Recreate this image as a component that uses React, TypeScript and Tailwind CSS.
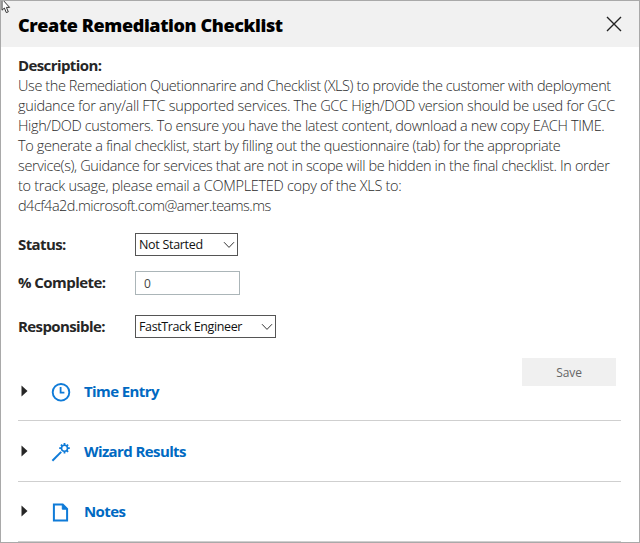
import type { ReactNode } from "react";

const description = [
  { text: "Use the Remediation Quetionnarire and Checklist (XLS) to provide the customer with deployment", cls: "tracking-[-0.4px]" },
  { text: "guidance for any/all FTC supported services. The GCC High/DOD version should be used for GCC", cls: "tracking-[-0.315px]" },
  { text: "High/DOD customers. To ensure you have the latest content, download a new copy EACH TIME.", cls: "tracking-[-0.36px]" },
  { text: "To generate a final checklist, start by filling out the questionnaire (tab) for the appropriate", cls: "tracking-[-0.383px]" },
  { text: "service(s), Guidance for services that are not in scope will be hidden in the final checklist. In order", cls: "tracking-[-0.37px]" },
  { text: "to track usage, please email a COMPLETED copy of the XLS to:", cls: "tracking-[-0.287px]" },
  { text: "d4cf4a2d.microsoft.com@amer.teams.ms", cls: "tracking-[-0.51px]" },
];

function Chevron() {
  return (
    <svg width="12" height="8" viewBox="0 0 12 8" fill="none" stroke="#333" strokeWidth="1">
      <path d="M1 1.2 6 6.4 11 1.2" />
    </svg>
  );
}

function ClockIcon() {
  return (
    <svg width="20" height="20" viewBox="0 0 20 20" fill="none" stroke="#0f7bd8">
      <circle cx="10" cy="10.3" r="8.3" strokeWidth="1.9" />
      <path d="M9.6 5V10.7H13.4" strokeWidth="1.8" />
    </svg>
  );
}

function WandIcon() {
  return (
    <svg width="20" height="20" viewBox="0 0 20 20" fill="none" stroke="#0f7bd8">
      <path d="M1.4 18.7 10.2 9.9" strokeWidth="2" />
      <circle cx="13.5" cy="6.2" r="3" strokeWidth="1.6" />
      <path d="M13.5 3.2V1M13.5 9.2V11.4M10.5 6.2H8.2M16.5 6.2H18.8M11.4 4.1 9.9 2.6M15.6 4.1 17.1 2.6M15.6 8.3 17.1 9.8" strokeWidth="1.8" />
    </svg>
  );
}

function NoteIcon() {
  return (
    <svg width="20" height="20" viewBox="0 0 20 20" fill="none" stroke="#0f7bd8" strokeWidth="2">
      <path d="M2.9 2.4H11.7L16.1 6.9V18.6H2.9Z" />
      <path d="M11.3 2.4V7.2H16.1Z" fill="#0f7bd8" strokeWidth="1" />
    </svg>
  );
}

function Section({ icon, children, cls }: { icon: ReactNode; children: ReactNode; cls: string }) {
  return (
    <button type="button" className={"flex w-[603px] items-start border-b border-[#cfcfcf] text-left " + cls}>
      <svg className="ml-[3px] mt-[15px]" width="7" height="12" viewBox="0 0 7 12">
        <path d="M.5.5 6.5 6 .5 11.5Z" fill="#262626" />
      </svg>
      <span className="ml-[23px] mt-[12px]">{icon}</span>
      <span className="ml-[13px] mt-[11px] text-[15px] font-bold leading-5 tracking-[-0.6px] text-[#0069c2]">{children}</span>
    </button>
  );
}

export default function App() {
  return (
    <div className="relative flex h-[543px] w-[640px] flex-col overflow-hidden border border-[#a9a9a9] bg-white font-['Open_Sans','Noto_Sans',sans-serif] text-[#262626]">
      <header className="flex h-[46px] shrink-0 items-center justify-between bg-[#f1f1f1] pl-[17px] pr-[17px]">
        <h1 className="mt-[2px] whitespace-nowrap text-[18px] font-extrabold leading-6 tracking-[-0.39px] text-black">Create Remediation Checklist</h1>
        <button type="button" aria-label="Close">
          <svg width="16" height="16" viewBox="0 0 16 16" stroke="#222" strokeWidth="1.4">
            <path d="M1 1 15 15M15 1 1 15" />
          </svg>
        </button>
      </header>

      <main className="flex flex-col pl-[17px]">
        <h2 className="mt-[8px] text-[15px] font-bold leading-5 tracking-[-0.6px]"><span>Description:</span></h2>
        <div className="mt-[1px] text-[14.5px] font-light leading-5 text-[#2b2b2b]">
          {description.map((l) => (
            <p key={l.text} className="whitespace-nowrap"><span className={l.cls}>{l.text}</span></p>
          ))}
        </div>

        <div className="mt-[17px] flex h-[23px] items-center">
          <label className="-mt-[2px] w-[117px] text-[15px] font-bold leading-5 tracking-[-0.6px]"><span>Status:</span></label>
          <div className="flex h-[23px] w-[103px] items-center justify-between border border-[#555] pl-[3px] pr-[2px] text-[12.5px] text-[#111]">
            <span className="mt-[1px] tracking-[-0.3px]">Not Started</span>
            <Chevron />
          </div>
        </div>
        <div className="mt-[15px] flex h-[24px] items-center">
          <label className="-mt-[2px] w-[117px] text-[15px] font-bold leading-5 tracking-[-0.55px]"><span>% Complete:</span></label>
          <div className="flex h-[24px] w-[105px] items-center border border-[#abb5b8] pl-[8px] pt-[1px] text-[12px] text-[#444]">0</div>
        </div>
        <div className="mt-[20px] flex h-[23px] items-center">
          <label className="-mt-[2px] w-[117px] text-[15px] font-bold leading-5 tracking-[-0.6px]"><span>Responsible:</span></label>
          <div className="flex h-[23px] w-[141px] items-center justify-between border border-[#555] pl-[3px] pr-[2px] text-[12.5px] text-[#111]">
            <span className="mt-[2px] tracking-[-0.38px]">FastTrack Engineer</span>
            <Chevron />
          </div>
        </div>

        <button type="button" className="ml-[504px] mt-[20px] flex h-[28px] w-[94px] items-center justify-center bg-[#f0f0f0] pt-[1px] text-[12px] tracking-[-0.1px] text-[#666]">Save</button>

        <div className="-mt-[16px] flex flex-col">
          <Section icon={<ClockIcon />} cls="h-[51px]">Time Entry</Section>
          <Section icon={<WandIcon />} cls="mt-[9px] h-[52px]">Wizard Results</Section>
          <Section icon={<NoteIcon />} cls="mt-[8px] h-[52px]">Notes</Section>
        </div>
      </main>

      <svg className="absolute left-0 top-0" width="11" height="14" viewBox="0 0 11 14">
        <path d="M1 -2V9.2L3.4 7 5.3 11.6 7.3 10.8 5.4 6.4H8.6Z" fill="#fff" stroke="#333" strokeWidth="1" />
      </svg>
    </div>
  );
}
